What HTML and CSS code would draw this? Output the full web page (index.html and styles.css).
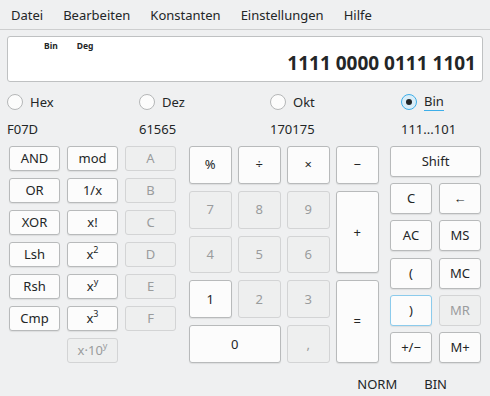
FILE: index.html
```html
<!DOCTYPE html>
<html lang="de">
<head>
    <meta charset="UTF-8">
    <meta name="viewport" content="width=device-width, initial-scale=1.0">
    <title>KCalc</title>
    <link rel="stylesheet" href="styles.css">
</head>
<body>

<div class="menubar">
    <span class="menu-item">Datei</span>
    <span class="menu-item">Bearbeiten</span>
    <span class="menu-item">Konstanten</span>
    <span class="menu-item">Einstellungen</span>
    <span class="menu-item">Hilfe</span>
</div>

<div class="main">
    <div class="display">
        <div class="indicators">
            <span>Bin</span>
            <span>Deg</span>
        </div>
        <div class="value">1111 0000 0111 1101</div>
    </div>

    <!-- number base selection -->
    <div class="bases">
        <label class="radio"><span class="circle"></span>Hex</label>
        <label class="radio"><span class="circle"></span>Dez</label>
        <label class="radio"><span class="circle"></span>Okt</label>
        <label class="radio checked"><span class="circle"></span><span class="focus">Bin</span></label>
    </div>
    <div class="base-values">
        <span>F07D</span>
        <span>61565</span>
        <span>170175</span>
        <span>111...101</span>
    </div>

    <div class="keypad">
        <!-- logic / function buttons -->
        <div class="block left">
            <button class="button">AND</button>
            <button class="button">mod</button>
            <button class="button" disabled>A</button>
            <button class="button">OR</button>
            <button class="button">1/x</button>
            <button class="button" disabled>B</button>
            <button class="button">XOR</button>
            <button class="button">x!</button>
            <button class="button" disabled>C</button>
            <button class="button">Lsh</button>
            <button class="button">x<sup>2</sup></button>
            <button class="button" disabled>D</button>
            <button class="button">Rsh</button>
            <button class="button">x<sup>y</sup></button>
            <button class="button" disabled>E</button>
            <button class="button">Cmp</button>
            <button class="button">x<sup>3</sup></button>
            <button class="button" disabled>F</button>
            <button class="button exp" disabled>x·10<sup>y</sup></button>
        </div>

        <!-- numbers and operators -->
        <div class="block mid">
            <button class="button">%</button>
            <button class="button">÷</button>
            <button class="button">×</button>
            <button class="button">−</button>
            <button class="button" disabled>7</button>
            <button class="button" disabled>8</button>
            <button class="button" disabled>9</button>
            <button class="button tall">+</button>
            <button class="button" disabled>4</button>
            <button class="button" disabled>5</button>
            <button class="button" disabled>6</button>
            <button class="button">1</button>
            <button class="button" disabled>2</button>
            <button class="button" disabled>3</button>
            <button class="button tall">=</button>
            <button class="button wide">0</button>
            <button class="button" disabled>,</button>
        </div>

        <!-- memory and clear -->
        <div class="block right">
            <button class="button wide">Shift</button>
            <button class="button">C</button>
            <button class="button">←</button>
            <button class="button">AC</button>
            <button class="button">MS</button>
            <button class="button">(</button>
            <button class="button">MC</button>
            <button class="button focused">)</button>
            <button class="button" disabled>MR</button>
            <button class="button">+/−</button>
            <button class="button">M+</button>
        </div>
    </div>

    <div class="statusbar">
        <span>NORM</span>
        <span>BIN</span>
    </div>
</div>

</body>
</html>
```

FILE: styles.css
```css
body {
    margin: 0;
    height: 396px;
    overflow: hidden;
    background-color: #eff0f1;
    color: #232627;
    font-family: "Noto Sans", sans-serif;
    font-size: 13px;
}

.menubar {
    display: flex;
    height: 30px;
    line-height: 30px;
    padding-left: 1px;
    border-bottom: 1px solid #cdcecf;
    box-sizing: border-box;
}

.menu-item {
    padding: 0 10px;
}

.main {
    padding: 6px 7px 0 7px;
}

.display {
    height: 46px;
    background-color: white;
    border: 1px solid #bfc1c2;
    border-radius: 3px;
    box-sizing: border-box;
    padding: 4px 6px 0 36px;
}

.indicators {
    display: flex;
    gap: 19px;
    font-size: 8.5px;
    font-weight: bold;
    line-height: 10px;
}

.value {
    text-align: right;
    font-size: 19px;
    font-weight: bold;
    line-height: 22px;
    margin-top: 1px;
}

.bases,
.base-values {
    display: grid;
    grid-template-columns: 132px 131px 131px 1fr;
}

.bases {
    height: 24px;
    margin-top: 8px;
    align-items: center;
}

.radio {
    display: flex;
    align-items: center;
    gap: 7px;
}

.circle {
    width: 14px;
    height: 14px;
    border: 1px solid #b5b7b8;
    border-radius: 50%;
    background-color: #fcfcfc;
    position: relative;
}

.radio.checked .circle {
    border-color: #3daee9;
    background-color: #d9edf8;
}

.radio.checked .circle::after {
    content: "";
    position: absolute;
    left: 4px;
    top: 4px;
    width: 6px;
    height: 6px;
    border-radius: 50%;
    background-color: #232627;
}

.focus {
    border-bottom: 1px solid #3daee9;
    line-height: 17px;
}

.base-values {
    height: 22px;
    line-height: 22px;
    margin-top: 4px;
}

.keypad {
    display: flex;
    margin-top: 6px;
    padding-left: 2px;
    height: 217px;
}

.block {
    display: grid;
    column-gap: 7px;
    row-gap: 7px;
}

.left {
    grid-template-columns: repeat(3, 51px);
    grid-template-rows: repeat(7, 1fr);
}

.mid {
    margin-left: 13px;
    grid-template-columns: repeat(4, 42.5px);
    grid-template-rows: repeat(5, 1fr);
    column-gap: 6.5px;
}

.right {
    margin-left: 11.5px;
    grid-template-columns: repeat(2, 42px);
    grid-template-rows: repeat(6, 1fr);
    row-gap: 6.4px;
}

.button {
    font-family: "Noto Sans", sans-serif;
    font-size: 13px;
    color: #232627;
    background-color: #fcfcfc;
    border: 1px solid #b8babb;
    border-radius: 3px;
    box-shadow: 0 1px 1px rgba(0, 0, 0, 0.08);
    padding: 0;
    line-height: 1;
}

.button:disabled {
    color: #9a9c9d;
    background-color: #eeefef;
    border-color: #d3d4d5;
    box-shadow: none;
}

.button sup {
    font-size: 9px;
    vertical-align: 6px;
    line-height: 0;
}

.button.exp {
    grid-column: 2;
}

.button.tall {
    grid-row: span 2;
}

.mid .button.wide {
    grid-column: span 2;
}

.right .button.wide {
    grid-column: span 2;
}

.button.focused {
    border-color: #8ccbec;
}

.statusbar {
    display: flex;
    justify-content: flex-end;
    gap: 27px;
    padding-right: 36px;
    margin-top: 12px;
}
```
